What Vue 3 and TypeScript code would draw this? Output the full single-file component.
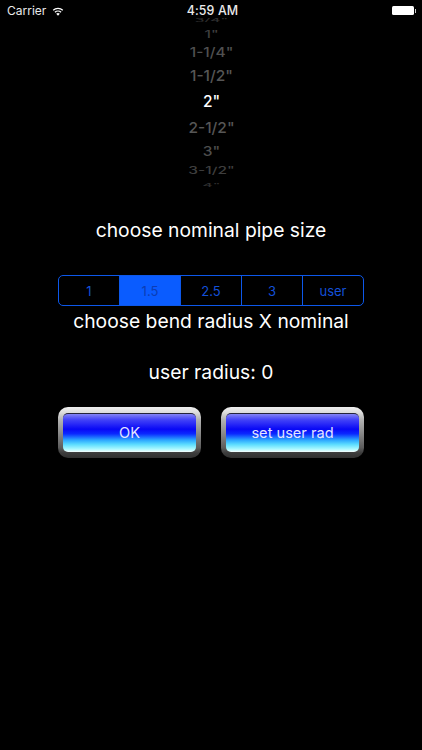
<script setup lang="ts">
interface Row { label: string; height: number; scale: number; color: string }
const rows: Row[] = [
  { label: '3/4"', height: 12, scale: 0.3, color: '#2e2e2e' },
  { label: '1"', height: 16, scale: 0.62, color: '#3e3e3e' },
  { label: '1-1/4"', height: 21, scale: 0.86, color: '#505050' },
  { label: '1-1/2"', height: 25, scale: 0.97, color: '#565656' },
  { label: '2"', height: 26, scale: 1, color: '#ffffff' },
  { label: '2-1/2"', height: 26, scale: 0.97, color: '#565656' },
  { label: '3"', height: 22, scale: 0.86, color: '#4e4e4e' },
  { label: '3-1/2"', height: 17, scale: 0.62, color: '#3e3e3e' },
  { label: '4"', height: 12, scale: 0.3, color: '#2e2e2e' },
]
const segments = ['1', '1.5', '2.5', '3', 'user']
const selected = 1
</script>

<template>
  <main class="screen">
    <header class="status">
      <div class="status-left">
        <span class="carrier">Carrier</span>
        <svg class="wifi" width="12" height="9" viewBox="0 0 14 10" aria-hidden="true">
          <path d="M7 10 L4.9 7.6 A3.2 3.2 0 0 1 9.1 7.6 Z" fill="#fff" />
          <path d="M3.4 5.9 A5.2 5.2 0 0 1 10.6 5.9" fill="none" stroke="#fff" stroke-width="1.4" />
          <path d="M1.4 3.6 A8 8 0 0 1 12.6 3.6" fill="none" stroke="#fff" stroke-width="1.4" />
        </svg>
      </div>
      <div class="time">4:59 AM</div>
      <div class="status-right">
        <span class="battery"></span><span class="battery-cap"></span>
      </div>
    </header>

    <section class="picker">
      <div
        v-for="row in rows"
        :key="row.label"
        class="picker-row"
        :style="{ height: row.height + 'px', color: row.color, transform: `scaleY(${row.scale})` }"
      >{{ row.label }}</div>
    </section>

    <p class="label nominal">choose nominal pipe size</p>

    <div class="segments">
      <div
        v-for="(seg, i) in segments"
        :key="seg"
        class="segment"
        :class="{ active: i === selected }"
      >{{ seg }}</div>
    </div>

    <p class="label bend">choose bend radius X nominal</p>
    <p class="label user">user radius: 0</p>

    <div class="buttons">
      <button class="chrome" type="button"><span class="glass">OK</span></button>
      <button class="chrome" type="button"><span class="glass">set user rad</span></button>
    </div>
  </main>
</template>

<style scoped>
.screen {
  width: 422px;
  height: 750px;
  background: #000;
  color: #fff;
  font-family: Inter, "Liberation Sans", sans-serif;
  overflow: hidden;
}
.status {
  height: 14px;
  box-sizing: border-box;
  padding: 3px 6px 0 7px;
  display: grid;
  grid-template-columns: 1fr auto 1fr;
  align-items: start;
  font-size: 12px;
  line-height: 16px;
  color: #eaeaea;
}
.status-left {
  display: flex;
  align-items: center;
  gap: 6px;
  height: 16px;
}
.time { font-size: 12.4px; font-weight: 500; letter-spacing: 0.1px; padding-left: 2px; }
.status-right {
  display: flex;
  justify-content: flex-end;
  align-items: center;
  height: 15px;
}
.battery {
  width: 22px;
  height: 9px;
  background: #fff;
  border-radius: 1.5px;
}
.battery-cap {
  width: 1.5px;
  height: 4px;
  background: #ccc;
  margin-left: 1px;
}
.picker {
  height: 174px;
  padding-left: 1px;
}
.picker-row {
  display: flex;
  align-items: center;
  justify-content: center;
  font-size: 15.5px;
  font-weight: 500;
}
.label {
  margin: 0;
  text-align: center;
  font-size: 19.3px;
  line-height: 24px;
  font-weight: 400;
}
.nominal { margin-top: 30px; }
.bend { margin-top: 3px; }
.user { margin-top: 27px; }
.segments {
  margin: 33px 58px 0;
  height: 31px;
  box-sizing: border-box;
  display: grid;
  grid-template-columns: 60px 61px 61px 61px 1fr;
  border: 1px solid #0d58ea;
  border-radius: 5px;
  overflow: hidden;
}
.segment {
  display: flex;
  align-items: center;
  justify-content: center;
  color: #1450d8;
  font-size: 13px;
  border-left: 1px solid #0d58ea;
}
.segment:first-child { border-left: 0; }
.segment.active {
  background: #0a5cff;
  color: #0c3cb4;
}
.buttons {
  margin: 23px 58px 0;
  display: flex;
  justify-content: space-between;
}
.chrome {
  width: 143px;
  height: 51px;
  padding: 6px 5px 6px;
  border: 0;
  border-radius: 10px;
  background: linear-gradient(#f0f0f0 0%, #dcdcdc 11%, #b4b4b4 24%, #8c8c8c 50%, #5c5c5c 80%, #3c3c3c 90%, #303030 100%);
  box-sizing: border-box;
  display: block;
}
.glass {
  display: flex;
  align-items: center;
  justify-content: center;
  height: 100%;
  border-radius: 5px;
  border-top: 1px solid #24243c;
  box-sizing: border-box;
  color: #e4e4ff;
  font-family: Inter, "Liberation Sans", sans-serif;
  font-size: 14.6px;
  background: linear-gradient(#8484f4 0%, #4646f8 14%, #0808f6 40%, #0a28ff 52%, #2aa4ff 68%, #5cdcff 80%, #a8f8ff 92%, #f8ffff 100%);
}
</style>
